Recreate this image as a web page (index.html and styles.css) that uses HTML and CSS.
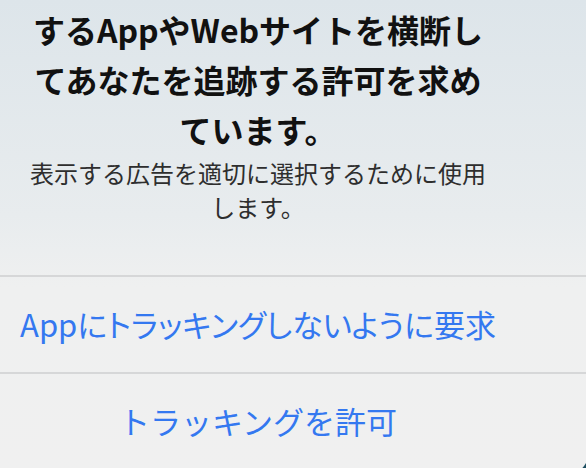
FILE: index.html
```html
<!DOCTYPE html>
<html lang="ja">

<head>
    <meta charset="UTF-8">
    <meta name="viewport" content="width=device-width, initial-scale=1.0">
    <title>トラッキングの許可</title>
    <link rel="stylesheet" href="styles.css">
</head>

<body>
    <div class="alert">
        <div class="alert-body">
            <h1 class="alert-title">するAppやWebサイトを横断し<br>てあなたを追跡する許可を求め<br>ています。</h1>
            <p class="alert-message">表示する広告を適切に選択するために使用<br>します。</p>
        </div>
        <button class="alert-action alert-action-long">Appにトラッキングしないように要求</button>
        <button class="alert-action">トラッキングを許可</button>
    </div>
</body>

</html>
```

FILE: styles.css
```css
html,
body {
    margin: 0;
    padding: 0;
    height: 100%;
    overflow: hidden;
    background-color: #1d4e60;
}

body {
    font-family: "Noto Sans CJK JP", "Noto Sans", sans-serif;
}

.alert {
    width: 664px;
    height: 478px;
    margin-left: -74px;
    background: linear-gradient(to bottom, #dde5ea 0%, #e8ecee 45%, #eff0f0 60%, #f0f0f0 100%);
    border-bottom-right-radius: 30px;
    overflow: hidden;
}

.alert-body {
    padding: 4px 20px 51px;
    text-align: center;
}

.alert-title {
    margin: 0;
    font-size: 32px;
    line-height: 50px;
    font-weight: 700;
    color: #111;
}

.alert-message {
    margin: 2px 0 0;
    font-size: 24px;
    line-height: 34px;
    color: #2e2e2e;
}

.alert-action {
    display: block;
    width: 100%;
    padding: 25px 0 26px;
    border: none;
    border-top: 2px solid #d6d7d8;
    background: transparent;
    font-family: inherit;
    font-size: 31px;
    line-height: 44px;
    color: #3478f0;
    text-align: center;
}

.alert-action-long {
    font-feature-settings: "palt";
}
```
